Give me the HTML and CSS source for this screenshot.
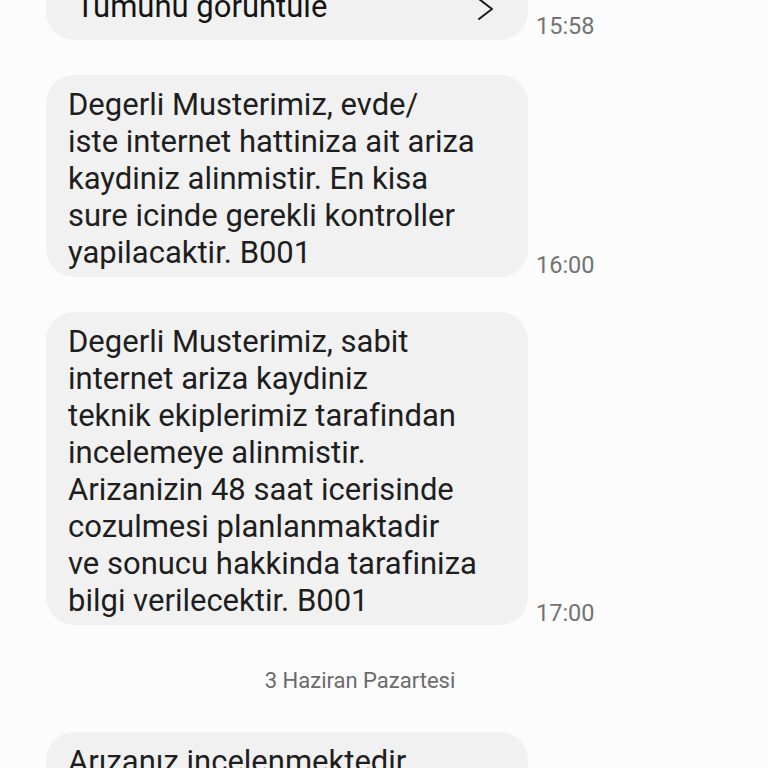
FILE: index.html
```html
<!DOCTYPE html>
<html lang="tr">
<head>
<meta charset="utf-8">
<link rel="stylesheet" href="styles.css">
</head>
<body>
<div class="thread">
  <div class="row">
    <div class="bubble bubble-more">
      <div class="prev">Degerli Musterimiz</div>
      <div class="more">
        <span class="more-label">Tumunu goruntule</span>
        <svg class="chev" width="20" height="26" viewBox="0 0 20 26"><path d="M3 3 L16 13 L3 23" fill="none" stroke="#1a1a1a" stroke-width="2" stroke-linecap="round" stroke-linejoin="round"/></svg>
      </div>
    </div>
    <span class="time time-first">15:58</span>
  </div>

  <div class="row">
    <div class="bubble">Degerli Musterimiz, evde/<br>iste internet hattiniza ait ariza<br>kaydiniz alinmistir. En kisa<br>sure icinde gerekli kontroller<br>yapilacaktir. B001</div>
    <span class="time">16:00</span>
  </div>

  <div class="row">
    <div class="bubble">Degerli Musterimiz, sabit<br>internet ariza kaydiniz<br>teknik ekiplerimiz tarafindan<br>incelemeye alinmistir.<br>Arizanizin 48 saat icerisinde<br>cozulmesi planlanmaktadir<br>ve sonucu hakkinda tarafiniza<br>bilgi verilecektir. B001</div>
    <span class="time">17:00</span>
  </div>

  <div class="date">3 Haziran Pazartesi</div>

  <div class="row">
    <div class="bubble">Arızanız incelenmektedir.<br>En kisa surede bilgi verilecektir.</div>
  </div>
</div>
</body>
</html>
```
FILE: styles.css
```css
html, body {
  margin: 0;
  padding: 0;
  background: #fcfcfc;
  overflow: hidden;
}
body {
  width: 768px;
  height: 768px;
  font-family: Roboto, "Noto Sans", sans-serif;
}
.thread {
  display: flex;
  flex-direction: column;
  padding-left: 46px;
  margin-top: -59px;
}
.row {
  display: flex;
  align-items: flex-end;
  gap: 8px;
  margin-bottom: 35px;
}
.bubble {
  width: 482px;
  box-sizing: border-box;
  background: #f1f1f1;
  border-radius: 28px;
  padding: 11px 18px 6px 22px;
  font-size: 31px;
  line-height: 37px;
  color: #1e1e1e;
  white-space: nowrap;
}
.bubble-more {
  padding: 10px 32px 15px 30px;
}
.prev {
  margin-left: -8px;
}
.more {
  display: flex;
  align-items: center;
  justify-content: space-between;
  color: #141414;
}
.chev {
  display: block;
  margin-top: 5px;
}
.time {
  font-size: 23.5px;
  line-height: 28px;
  color: #737373;
  margin-bottom: -2px;
}
.time-first {
  margin-bottom: 0;
}
.date {
  text-align: center;
  padding-right: 94px;
  font-size: 22px;
  line-height: 30px;
  color: #6b6b6b;
  margin-top: 6px;
  margin-bottom: 36px;
}
```
